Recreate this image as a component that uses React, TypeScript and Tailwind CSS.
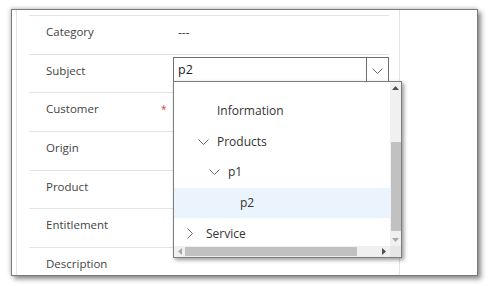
import type { ReactNode } from 'react';

type Row = { label: string; value?: string; required?: boolean; input?: boolean };

const rows: Row[] = [
  { label: 'Category', value: '---' },
  { label: 'Subject', input: true },
  { label: 'Customer', required: true },
  { label: 'Origin' },
  { label: 'Product' },
  { label: 'Entitlement' },
  { label: 'Description' },
];

type Item = { text: string; pad: string; chevron?: 'down' | 'right'; selected?: boolean; lift?: boolean };

const items: Item[] = [
  { text: 'Query', pad: 'pl-[13px]', chevron: 'down', lift: true },
  { text: 'Information', pad: 'pl-[24px]' },
  { text: 'Products', pad: 'pl-[24px]', chevron: 'down' },
  { text: 'p1', pad: 'pl-[35px]', chevron: 'down' },
  { text: 'p2', pad: 'pl-[47px]', selected: true },
  { text: 'Service', pad: 'pl-[13px]', chevron: 'right' },
];

function ChevronDown({ className = '' }: { className?: string }) {
  return (
    <svg width="11" height="6" viewBox="0 0 11 6" className={className}>
      <polyline points="0.5,0.5 5.5,5.5 10.5,0.5" fill="none" stroke="#6b6b6b" strokeWidth="1" />
    </svg>
  );
}

function ChevronRight() {
  return (
    <svg width="6" height="11" viewBox="0 0 6 11">
      <polyline points="0.5,0.5 5.5,5.5 0.5,10.5" fill="none" stroke="#6b6b6b" strokeWidth="1" />
    </svg>
  );
}

function Arrow({ dir, color }: { dir: 'up' | 'down' | 'left' | 'right'; color: string }) {
  const pts = {
    up: '0,4 3.5,0 7,4',
    down: '0,0 3.5,4 7,0',
    left: '4,0 0,3.5 4,7',
    right: '0,0 4,3.5 0,7',
  }[dir];
  const vertical = dir === 'up' || dir === 'down';
  return (
    <svg width={vertical ? 7 : 4} height={vertical ? 4 : 7} viewBox={vertical ? '0 0 7 4' : '0 0 4 7'}>
      <polygon points={pts} fill={color} />
    </svg>
  );
}

function Dropdown() {
  return (
    <div className="absolute left-0 top-[26px] w-[229px] h-[177px] bg-white border border-[#7d7d7d] shadow-[2px_2px_4px_rgba(0,0,0,0.4)] z-10 flex flex-col">
      <div className="flex flex-1 min-h-0">
        {/* tree list */}
        <div className="flex-1 overflow-hidden">
          <div className="-mt-[17px] text-[12px] text-[#333]">
            {items.map((it) => (
              <div
                key={it.text}
                className={`h-[30.75px] flex items-center whitespace-nowrap ${it.pad} ${it.selected ? 'bg-[#ebf3fc]' : ''}`}
              >
                <span className={`w-[19px] flex items-center ${it.lift ? '-translate-y-[6px]' : ''}`}>
                  {it.chevron === 'down' && <ChevronDown />}
                  {it.chevron === 'right' && <ChevronRight />}
                </span>
                <span className={it.lift ? '-translate-y-[6px]' : ''}>{it.text}</span>
              </div>
            ))}
          </div>
        </div>
        {/* vertical scrollbar */}
        <div className="w-[11px] bg-[#f0f0f0] flex flex-col items-center">
          <div className="h-[13px] flex items-center justify-center">
            <Arrow dir="up" color="#505050" />
          </div>
          <div className="flex-1 flex flex-col pt-[47px] pb-[3px]">
            <div className="w-[10px] flex-1 bg-[#c1c1c1]" />
          </div>
          <div className="h-[12px] flex items-center justify-center">
            <Arrow dir="down" color="#a8a8a8" />
          </div>
        </div>
      </div>
      {/* horizontal scrollbar */}
      <div className="h-[11px] flex bg-[#f0f0f0]">
        <div className="flex-1 flex items-center">
          <div className="w-[11px] flex justify-center">
            <Arrow dir="left" color="#a8a8a8" />
          </div>
          <div className="w-[172px] h-[9px] bg-[#c1c1c1]" />
          <div className="flex-1 flex justify-end pr-[4px]">
            <Arrow dir="right" color="#505050" />
          </div>
        </div>
        <div className="w-[11px] bg-[#e6e6e6]" />
      </div>
    </div>
  );
}

function Field({ row }: { row: Row }): ReactNode {
  return (
    <div className="h-[38.67px] border-t border-[#e3e3e3] flex">
      <div className="w-[144px] pl-[17px] pt-[8px] flex text-[11.5px] text-[#444] leading-[16px]">
        <span className="w-[115px]">{row.label}</span>
        {row.required && <span className="text-[#d83b3b] text-[10px]">*</span>}
      </div>
      <div className="flex-1 relative">
        {row.value && (
          <div className="pl-[5px] pt-[9px] text-[12px] text-[#444] leading-[16px]">{row.value}</div>
        )}
        {row.input && (
          <>
            <div className="mt-[2px] h-[28px] border border-[#6e6e6e] flex bg-white">
              <div className="flex-1 pl-[4px] flex items-center text-[12.5px] text-[#222]">p2</div>
              <div className="w-[22px] border-l border-[#6e6e6e] flex items-center justify-center">
                <ChevronDown />
              </div>
            </div>
            <Dropdown />
          </>
        )}
      </div>
    </div>
  );
}

export default function App() {
  return (
    <div className="w-[490px] h-[286px] bg-white pt-[9px] pl-[11px] font-['Open_Sans',sans-serif]">
      <div className="w-[467px] h-[267px] border border-[#7a7a7a] bg-white flex shadow-[3px_3px_5px_rgba(0,0,0,0.45),-1px_-1px_4px_rgba(0,0,0,0.2)]">
        <div className="w-[5px] border-r border-[#e3e3e3]" />
        {/* form column */}
        <div className="w-[383px] border-r border-[#e3e3e3] pl-[12px] pr-[10px] pt-[5px] overflow-visible">
          {rows.map((r) => (
            <Field key={r.label} row={r} />
          ))}
        </div>
        <div className="flex-1" />
      </div>
    </div>
  );
}
